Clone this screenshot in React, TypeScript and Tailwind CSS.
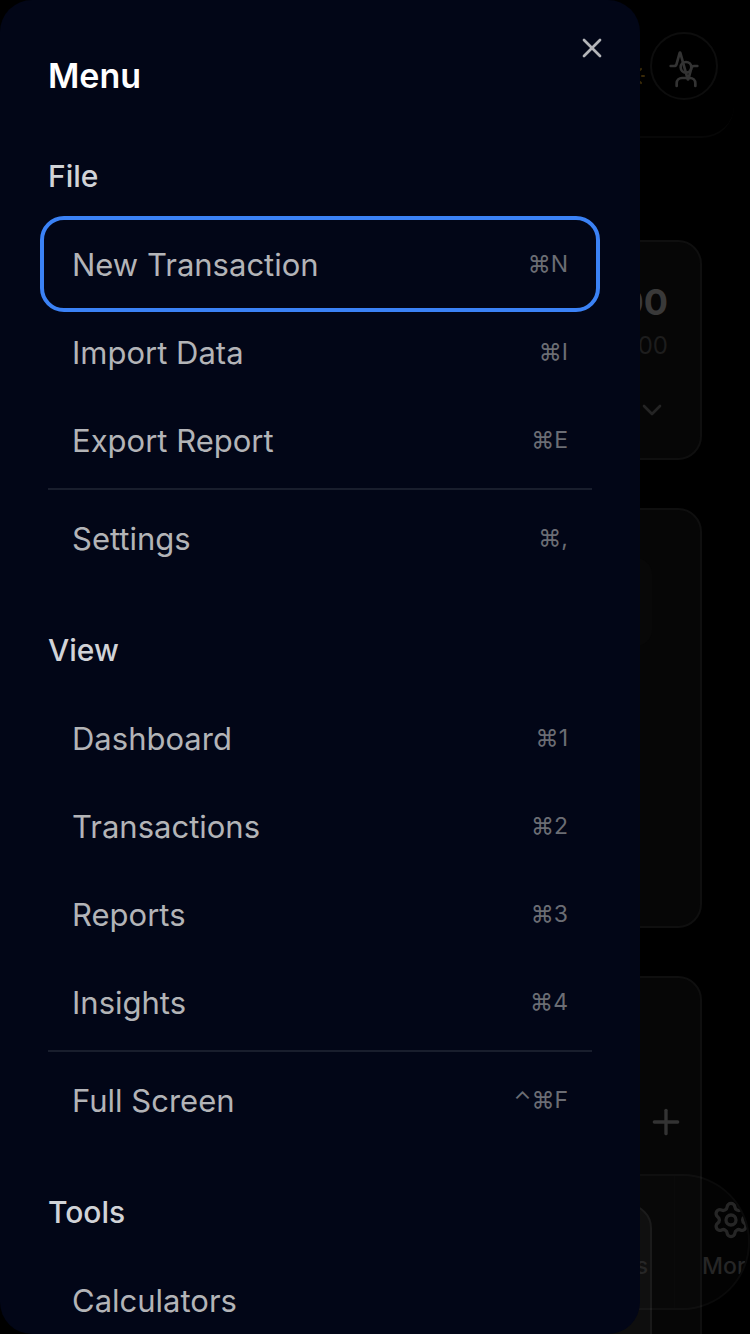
import { Fragment } from "react";
import type { LucideIcon } from "lucide-react";
import {
  Activity,
  ChartPie,
  ChevronDown,
  House,
  Plus,
  Settings,
  Sun,
  Target,
  User,
  Wallet,
  Wrench,
  X,
} from "lucide-react";

type MenuItem = { label: string; shortcut?: string; separated?: boolean };
type MenuSection = { title: string; items: MenuItem[] };

const sections: MenuSection[] = [
  {
    title: "File",
    items: [
      { label: "New Transaction", shortcut: "⌘N" },
      { label: "Import Data", shortcut: "⌘I" },
      { label: "Export Report", shortcut: "⌘E" },
      { label: "Settings", shortcut: "⌘,", separated: true },
    ],
  },
  {
    title: "View",
    items: [
      { label: "Dashboard", shortcut: "⌘1" },
      { label: "Transactions", shortcut: "⌘2" },
      { label: "Reports", shortcut: "⌘3" },
      { label: "Insights", shortcut: "⌘4" },
      { label: "Full Screen", shortcut: "⌃⌘F", separated: true },
    ],
  },
  {
    title: "Tools",
    items: [{ label: "Calculators" }],
  },
];

const tabs: { label: string; icon: LucideIcon }[] = [
  { label: "Home", icon: House },
  { label: "Wallet", icon: Wallet },
  { label: "Budget", icon: ChartPie },
  { label: "Goals", icon: Target },
  { label: "Activity", icon: Activity },
  { label: "Tools", icon: Wrench },
  { label: "More", icon: Settings },
];

function MenuRow({ item, active }: { item: MenuItem; active: boolean }) {
  return (
    <button
      type="button"
      className={
        active
          ? "flex h-20 w-full items-center justify-between rounded-2xl px-6 outline-4 outline-offset-4 outline-[#3b82f6]"
          : "flex h-20 w-full items-center justify-between rounded-2xl px-6"
      }
    >
      <span className="pt-0.5 text-[31px] leading-10 text-[#b3b4b7]">{item.label}</span>
      {item.shortcut && (
        <kbd className="font-[Inter,'Noto_Sans',sans-serif] text-[23px] leading-8 text-[#6b6d74]">
          {item.shortcut}
        </kbd>
      )}
    </button>
  );
}

function MenuDrawer() {
  return (
    <aside
      role="dialog"
      aria-label="Menu"
      className="absolute inset-y-0 left-0 w-full max-w-[640px] overflow-y-auto rounded-[32px] bg-[#020617] p-12 [scrollbar-width:none]"
    >
      <button type="button" aria-label="Close menu" className="absolute top-8 right-8 text-[#b4b5b9]">
        <X size={32} />
      </button>
      <h2 className="text-[34px] leading-[56px] font-semibold text-white">Menu</h2>
      {sections.map((section, s) => (
        <section key={section.title} className="mt-12">
          <h3 className="mb-6 text-[30px] leading-[48px] font-medium text-[#d1d3d7]">{section.title}</h3>
          <div className="flex flex-col gap-2">
            {section.items.map((item, i) => (
              <Fragment key={item.label}>
                {item.separated && <hr className="border-t-2 border-[#191e2d]" />}
                <MenuRow item={item} active={s === 0 && i === 0} />
              </Fragment>
            ))}
          </div>
        </section>
      ))}
    </aside>
  );
}

function TopBar() {
  return (
    <header className="mx-4 flex items-end justify-end gap-1 rounded-b-[32px] border-b-2 border-[#070707] px-4 pt-8 pb-9">
      <Sun size={24} className="mb-3 text-[#3a2a08]" />
      <button
        type="button"
        aria-label="Account"
        className="relative flex size-[68px] items-center justify-center rounded-full border-2 border-[#0d0d0d] text-[#333333]"
      >
        <Activity size={32} />
        <User size={32} className="absolute top-6 left-[18px]" />
      </button>
    </header>
  );
}

export default function App() {
  return (
    <div className="relative flex h-screen flex-col overflow-hidden bg-black font-[Inter,sans-serif]">
      <TopBar />
      <main className="mt-[102px] flex flex-col gap-12 px-12">
        <section className="flex flex-col items-end rounded-3xl border-2 border-[#0f0f0f] bg-[#060606] p-8">
          <p className="text-4xl leading-[56px] font-bold text-[#393939]">$0.00</p>
          <p className="text-2xl leading-8 text-[#1d1d1d]">$0.00</p>
          <ChevronDown size={32} className="mt-8 text-[#242424]" />
        </section>
        <section className="h-[420px] rounded-3xl border-2 border-[#0f0f0f] bg-[#060606] p-12">
          <div className="h-[88px] rounded-2xl bg-[#080808]" />
        </section>
        <section className="flex h-[480px] flex-col items-end rounded-3xl border-2 border-[#0f0f0f] bg-[#060606] px-3.5 pt-[124px]">
          <button type="button" aria-label="Add" className="text-[#333333]">
            <Plus size={40} />
          </button>
          <div className="mt-[62px] mr-[34px] h-60 w-full max-w-[540px] rounded-3xl border-2 border-[#191919] bg-[#0e0e0e]" />
        </section>
      </main>
      <nav className="absolute inset-x-0 bottom-6 flex h-[136px] overflow-hidden rounded-full border-2 border-white/3 bg-white/1">
        {tabs.map(({ label, icon: Icon }) => (
          <button
            key={label}
            type="button"
            className="flex w-28 shrink-0 flex-col items-center gap-2.5 border-l border-white/1 pt-6 text-[#262626]"
          >
            <Icon size={40} />
            <span className="text-[23px] leading-8 font-medium">{label}</span>
          </button>
        ))}
      </nav>
      <MenuDrawer />
    </div>
  );
}
